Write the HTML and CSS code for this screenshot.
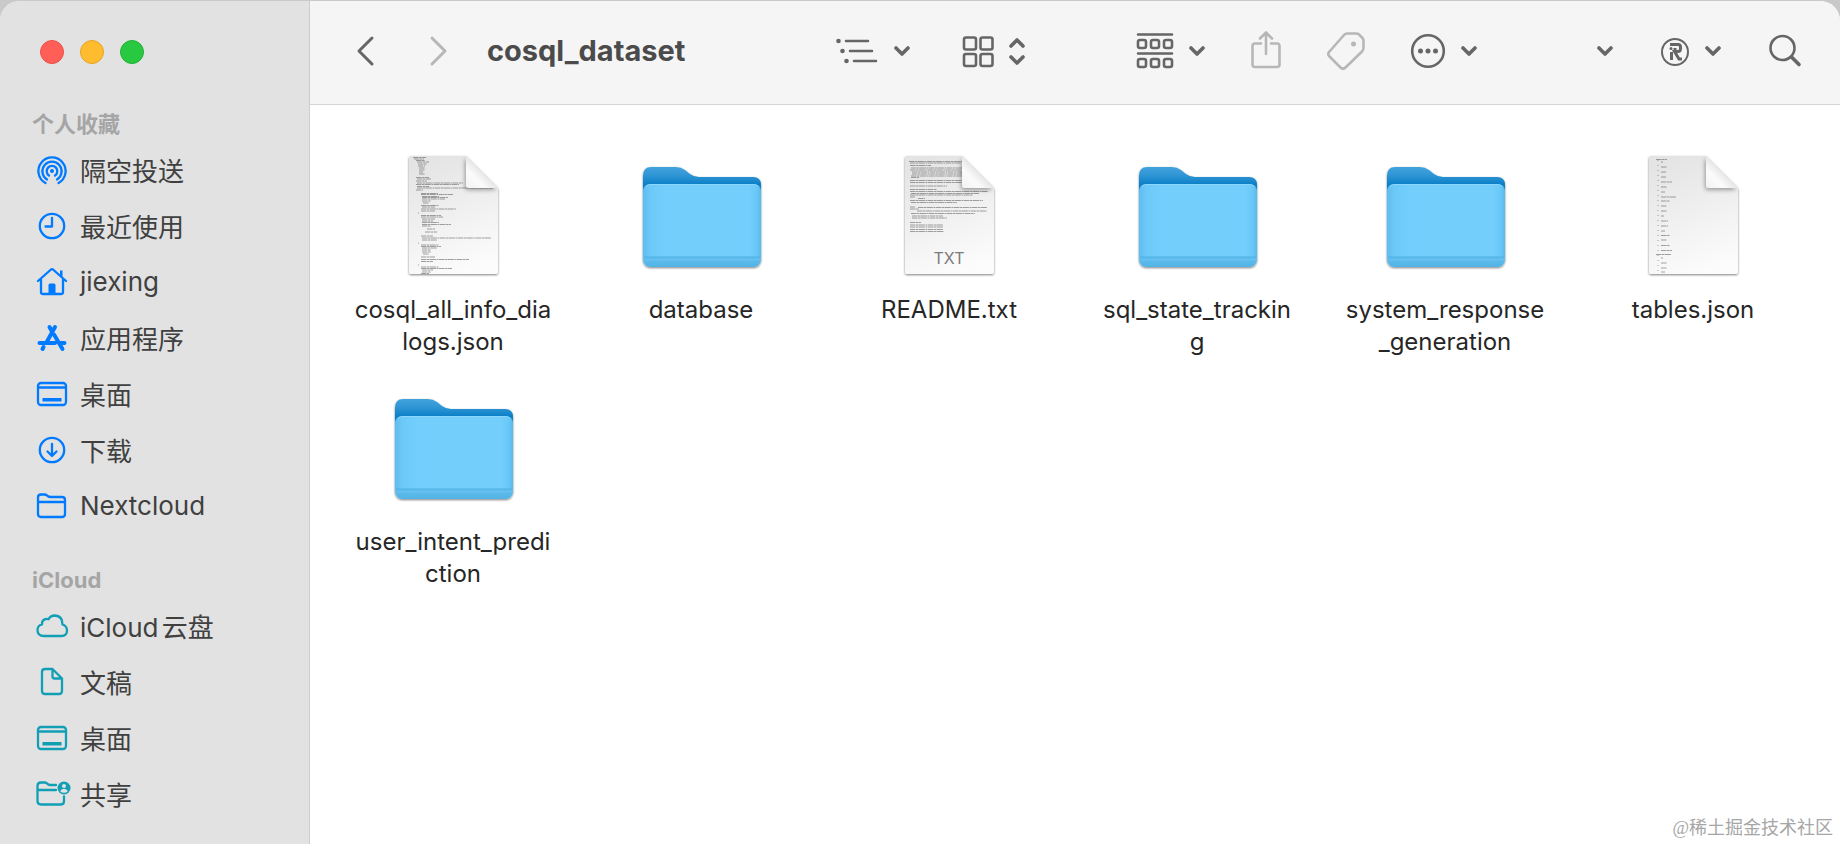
FILE: index.html
```html
<!DOCTYPE html>
<html lang="zh-CN">
<head>
<meta charset="utf-8">
<title>cosql_dataset</title>
<link rel="stylesheet" href="styles.css">
</head>
<body>
<svg class="defs" width="0" height="0" aria-hidden="true">
  <defs>
    <linearGradient id="back" x1="0" y1="16" x2="0" y2="40" gradientUnits="userSpaceOnUse">
      <stop offset="0" stop-color="#43a3dc"/><stop offset=".4" stop-color="#2b93d3"/><stop offset=".72" stop-color="#0d80c8"/>
    </linearGradient>
    <linearGradient id="side" x1="0" x2="1">
      <stop offset="0" stop-color="#5dbdf0"/><stop offset=".06" stop-color="#6bc9f8"/><stop offset=".2" stop-color="#73cefc"/><stop offset=".9" stop-color="#73cefc"/><stop offset=".96" stop-color="#6ac8f7"/><stop offset="1" stop-color="#5ab9ec"/>
    </linearGradient>
    <linearGradient id="foot" x1="0" x2="0" y1="0" y2="1">
      <stop offset="0" stop-color="#62bfef"/><stop offset="1" stop-color="#52b3e6"/>
    </linearGradient>
    <linearGradient id="paper" x1=".3" y1="0" x2=".6" y2="1">
      <stop offset="0" stop-color="#e4e4e4"/><stop offset=".55" stop-color="#f1f1f1"/><stop offset="1" stop-color="#fcfcfc"/>
    </linearGradient>
    <linearGradient id="fold" x1="1" y1="0" x2="0" y2="1">
      <stop offset=".45" stop-color="#e2e2e2"/><stop offset=".7" stop-color="#fbfbfb"/><stop offset="1" stop-color="#f2f2f2"/>
    </linearGradient>
    <filter id="shade" x="-20%" y="-20%" width="140%" height="140%">
      <feDropShadow dx="0" dy="1" stdDeviation="1.300" flood-color="#000" flood-opacity=".5"/>
    </filter>
    <filter id="fold-shade" x="-30%" y="-30%" width="160%" height="160%">
      <feDropShadow dx="-1" dy="2" stdDeviation="2" flood-color="#000" flood-opacity=".35"/>
    </filter>
    <clipPath id="sheet"><path d="M20 5H78L109 36V123H20Z"/></clipPath>
  </defs>
  <symbol id="folder" viewBox="0 0 128 128">
    <g filter="url(#shade)">
      <path d="M6 40V25Q6 16 14 16H39Q44 16 48 19L53 23Q57 26 62 26H116Q124 26 124 34V40Z" fill="url(#back)"/>
      <path d="M6 41Q6 33 14 33H116Q124 33 124 41V107Q124 116 115 116H15Q6 116 6 107Z" fill="url(#side)"/>
      <path d="M6 106H124V107Q124 116 115 116H15Q6 116 6 107Z" fill="url(#foot)"/>
    </g>
    <path d="M9 35Q11 33.500 14 33.500H116Q119 33.500 121 35" fill="none" stroke="#8bd6fb" stroke-width="1"/>
    <path d="M7 106H123" stroke="#4eb0e2" stroke-width="1"/><path d="M7 109H123" stroke="#67c2f0" stroke-width="1"/>
  </symbol>
  <symbol id="page" viewBox="0 0 128 128">
    <path d="M22 5H77L109 37V121Q109 123 107 123H22Q20 123 20 121V7Q20 5 22 5Z" fill="url(#paper)" filter="url(#shade)"/>
  </symbol>
  <symbol id="corner" viewBox="0 0 128 128">
    <g clip-path="url(#sheet)"><path d="M77 5L109 37H80Q77 37 77 34Z" fill="url(#fold)" filter="url(#fold-shade)"/></g>
  </symbol>
  <symbol id="chevron" viewBox="0 0 16 12"><path d="M2 3L8 9L14 3" class="bold"/></symbol>
  <symbol id="desktop" viewBox="0 0 34 34"><rect x="3" y="6" width="28" height="22" rx="3"/><path d="M3 10.500H31"/><rect x="7.500" y="21" width="19" height="3.500" class="solid"/></symbol>
</svg>

<div class="window">
  <aside class="sidebar">
    <div class="lights">
      <button class="light close" aria-label="关闭"></button>
      <button class="light minimize" aria-label="最小化"></button>
      <button class="light zoom" aria-label="缩放"></button>
    </div>
    <nav class="places">
      <h2 class="heading">个人收藏</h2>
      <ul class="list favorites">
        <li><a class="place" href="#"><svg class="glyph" viewBox="0 0 34 34"><circle cx="17" cy="18" r="2" class="solid"/><path d="M14 22.500A5.300 5.300 0 1 1 20 22.500M12 26.500A9.600 9.600 0 1 1 22 26.500M10.500 30A13.600 13.600 0 1 1 23.500 30"/></svg>隔空投送</a></li>
        <li><a class="place" href="#"><svg class="glyph" viewBox="0 0 34 34"><circle cx="17" cy="17" r="12.200"/><path d="M17 9V17.500H10.500"/></svg>最近使用</a></li>
        <li><a class="place" href="#"><svg class="glyph" viewBox="0 0 34 34"><path d="M3 16L16 4.500Q17 3.700 18 4.500L31 16M6 14V27Q6 29 8 29H26Q28 29 28 27V14"/><path d="M25 5.500H27.500V12L25 10Z" class="solid"/><path d="M13.500 29V20Q13.500 18.500 15 18.500H19Q20.500 18.500 20.500 20V29Z" class="solid"/></svg>jiexing</a></li>
        <li><a class="place" href="#"><svg class="glyph" viewBox="0 0 34 34"><path d="M14.500 6L17 10.500M20 6L12 20.500M4.500 22H20M25 22H29.500M19 13.500L27.500 28M8.500 26L7.500 28" class="thick"/></svg>应用程序</a></li>
        <li><a class="place" href="#"><svg class="glyph"><use href="#desktop"/></svg>桌面</a></li>
        <li><a class="place" href="#"><svg class="glyph" viewBox="0 0 34 34"><circle cx="17" cy="17" r="12.200"/><path d="M17 11V22.500M12.500 18.500L17 23L21.500 18.500"/></svg>下载</a></li>
        <li><a class="place" href="#"><svg class="glyph" viewBox="0 0 34 34"><path d="M3 25V8.500Q3 5.500 6 5.500H9.500Q11 5.500 12 6.500L13 7.300Q14 8 15.500 8H27Q30 8 30 11V25Q30 28 27 28H6Q3 28 3 25ZM3 13H30"/></svg>Nextcloud</a></li>
      </ul>
      <h2 class="heading">iCloud</h2>
      <ul class="list cloud">
        <li><a class="place" href="#"><svg class="glyph" viewBox="0 0 34 34"><path d="M9 27Q2.500 27 2.500 21Q2.500 16.500 7 15.500Q6.800 10.500 11 10Q12.300 9.800 13.500 10.300Q15.500 6.500 20 6.500Q27.500 7 27.500 15.500Q32 17 32 21.500Q32 27 26.500 27Z"/></svg>iCloud云盘</a></li>
        <li><a class="place" href="#"><svg class="glyph" viewBox="0 0 34 34"><path d="M17.500 4H10Q7 4 7 7V26Q7 29 10 29H24Q27 29 27 26V13.500ZM17.500 4V11.500Q17.500 13.500 19.500 13.500H27"/></svg>文稿</a></li>
        <li><a class="place" href="#"><svg class="glyph"><use href="#desktop"/></svg>桌面</a></li>
        <li><a class="place" href="#"><svg class="glyph" viewBox="0 0 34 34"><path d="M21 8H15Q14 8 13 7.300L11.500 6Q10.800 5.500 9.500 5.500H6Q2.500 5.500 2.500 9V24Q2.500 27.500 6 27.500H26Q29 27.500 29 24V19.500M2.500 13H21"/><circle cx="29" cy="11" r="6.500" class="solid"/><circle cx="29" cy="9" r="2" class="cut"/><path d="M25.200 14.300Q26 11.800 29 11.800T32.800 14.300Q31.500 15.800 29 15.800T25.200 14.300Z" class="cut"/></svg>共享</a></li>
      </ul>
    </nav>
  </aside>

  <div class="main">
    <header class="toolbar">
      <div class="history">
        <button class="tool" aria-label="后退"><svg class="arrow" viewBox="0 0 18 30"><path d="M16 2L3 15L16 28" class="strong"/></svg></button>
        <button class="tool dim" aria-label="前进"><svg class="arrow" viewBox="0 0 18 30"><path d="M2 2L15 15L2 28" class="strong"/></svg></button>
      </div>
      <h1 class="title">cosql_dataset</h1>
      <div class="clusters">
        <div class="cluster views">
          <button class="tool" aria-label="列表"><svg width="42" height="36" viewBox="0 0 42 36"><path d="M10 8H32M14 18H36M18 28H40"/><circle cx="2.500" cy="8" r="2.300" class="solid"/><circle cx="6.500" cy="18" r="2.300" class="solid"/><circle cx="10.500" cy="28" r="2.300" class="solid"/></svg><svg class="chev"><use href="#chevron"/></svg></button>
          <button class="tool" aria-label="图标显示"><svg width="30" height="36" viewBox="0 0 30 36"><rect x="1" y="4.500" width="12" height="12" rx="2"/><rect x="17.500" y="4.500" width="12" height="12" rx="2"/><rect x="1" y="21" width="12" height="12" rx="2"/><rect x="17.500" y="21" width="12" height="12" rx="2"/></svg><svg width="16" height="36" viewBox="0 0 16 36"><path d="M2 13L8 7L14 13M2 24L8 30L14 24" class="bold"/></svg></button>
        </div>
        <div class="cluster actions">
          <button class="tool" aria-label="分组"><svg width="36" height="36" viewBox="0 0 36 36"><path d="M1 1.500H35M1 20.500H35"/><rect x="1" y="7" width="8" height="8" rx="2"/><rect x="14" y="7" width="8" height="8" rx="2"/><rect x="27" y="7" width="8" height="8" rx="2"/><rect x="1" y="26" width="8" height="8" rx="2"/><rect x="14" y="26" width="8" height="8" rx="2"/><rect x="27" y="26" width="8" height="8" rx="2"/></svg><svg class="chev"><use href="#chevron"/></svg></button>
          <button class="tool dim" aria-label="共享"><svg width="30" height="40" viewBox="0 0 30 40"><path d="M10 12.500H4Q1.500 12.500 1.500 15V33.500Q1.500 36 4 36H26Q28.500 36 28.500 33.500V15Q28.500 12.500 26 12.500H20M15 23V2M9 7.500L15 1.500L21 7.500"/></svg></button>
          <button class="tool dim" aria-label="标签"><svg width="38" height="38" viewBox="0 0 38 38"><path d="M20 1.500H29Q31 1.500 32 2.500L35.500 6Q36.500 7 36.500 9V16Q36.500 18 35 19.500L18.500 35.500Q16 38 13.500 35.500L2.500 24.500Q0 22 2.500 19.500L17 3Q18.500 1.500 20 1.500Z"/><circle cx="26.500" cy="12" r="2.500" class="solid"/></svg></button>
          <button class="tool" aria-label="操作"><svg width="34" height="36" viewBox="0 0 34 36"><circle cx="17" cy="18" r="15.800"/><circle cx="9.500" cy="18" r="2.500" class="solid"/><circle cx="17" cy="18" r="2.500" class="solid"/><circle cx="24.500" cy="18" r="2.500" class="solid"/></svg><svg class="chev"><use href="#chevron"/></svg></button>
        </div>
        <div class="cluster">
          <button class="tool" aria-label="更多"><svg class="chev"><use href="#chevron"/></svg></button>
          <button class="tool" aria-label="R"><svg width="28" height="34" viewBox="0 0 28 34"><circle cx="14" cy="18" r="13" class="thin"/><path d="M9 10.500H17Q19.500 10.500 19.500 13V14.500Q19.500 17.500 17 17.500H13.500L18 25H21M14 14V17.500M10.500 18V26" class="flat"/><circle cx="10" cy="14.500" r="1.500" class="solid"/></svg><svg class="chev"><use href="#chevron"/></svg></button>
          <button class="tool" aria-label="搜索"><svg width="32" height="34" viewBox="0 0 32 34"><circle cx="13.500" cy="14" r="12"/><path d="M22.500 23L30 30.500" class="bold"/></svg></button>
        </div>
      </div>
    </header>

    <main class="files">
      <button class="file"><svg class="icon" viewBox="0 0 128 128"><use href="#page"/>
        <g clip-path="url(#sheet)" class="print">
          <path d="M24 6.500H37M25 8H35M27 9.500H36M28 11H40M29 13H38M29 15H36M30 17H36M30 19H36M30 21H34M30 23H36"/>
          <path d="M27 26.500H40M28 28H42M27 30H38M28 32H74M27 33.500H70M28 35.500H40M28 37H104M27 39H34"/>
          <path d="M32 42.500H49M32 43.500H64M33 45.500H50M33 46.500H59M33 48H56M33 50H42M34 52H40M32 54.500H50M33 56H46M32 58H67M32 60H46M29 62H30"/>
          <path d="M32 64.500H52M32 66H54M33 68H46M33 70H44M33 71.500H50M33 73.500H62M33 75H42M38 78H46M36 81H48M32 85H44M33 87H102M33 89H48M29 92H30"/>
          <path d="M32 94H50M32 95.500H52M33 97H48M33 99H42M33 101H42M34 103H40M32 106H46M32 108.500H80M32 110.500H44M29 114H30M32 116H50M32 117.500H63M33 119H44M33 121H42M32 122.500H40"/>
        </g><use href="#corner"/></svg><span class="name">cosql_all_info_dia<br>logs.json</span></button>
      <button class="file"><svg class="icon"><use href="#folder"/></svg><span class="name">database</span></button>
      <button class="file"><svg class="icon" viewBox="0 0 128 128"><use href="#page"/>
        <g clip-path="url(#sheet)" class="print">
          <path d="M24 10.500H80M25 12H76M25 14.500H46M26 17H80M25 19H82M27 21H80M27 23H78M26 25H79M26 26.500H34"/>
          <path d="M25 29.500H84M25 31.500H84M25 35H62M25 38.500H52M25 40.500H103M26 42.500H94M25 44H88M25 46H30M33 47.500H40M25 49.500H98M26 51.500H72"/>
          <path d="M25 56H30M33 56.500H102M25 58H34M32 60H102M26 62.500H90M27 65H58M27 67H62M25 71.500H36M25 74H58M25 76H58M25 78.500H58M25 80.500H59"/>
        </g><use href="#corner"/><text x="64" y="113" class="kind">TXT</text></svg><span class="name">README.txt</span></button>
      <button class="file"><svg class="icon"><use href="#folder"/></svg><span class="name">sql_state_trackin<br>g</span></button>
      <button class="file"><svg class="icon"><use href="#folder"/></svg><span class="name">system_response<br>_generation</span></button>
      <button class="file"><svg class="icon" viewBox="0 0 128 128"><use href="#page"/>
        <g clip-path="url(#sheet)" class="print">
          <path d="M29 9V123" class="margin"/>
          <path d="M27 8.500H38M32 11H34M32 16H38M32 21H37M32 26H37M32 31H43M32 36H38M32 41H36M32 46H47M32 50H41M32 55H38M32 60H38M32 65H35M32 70H39M32 75H39M32 80H36M32 84.500H41M32 89H38M32 94.500H41M32 99.500H43M27 103.500H42M32 107H34M32 112H38M32 117H38M32 121H36"/>
        </g><use href="#corner"/></svg><span class="name">tables.json</span></button>
      <button class="file"><svg class="icon"><use href="#folder"/></svg><span class="name">user_intent_predi<br>ction</span></button>
    </main>
  </div>
  <p class="credit">@稀土掘金技术社区</p>
</div>
</body>
</html>
```
FILE: styles.css
```css
* { box-sizing: border-box; }

body {
  margin: 0;
  padding-top: 1px;
  background: #c9c9c9;
  font-family: Inter, "Noto Sans CJK SC", sans-serif;
}

button {
  margin: 0;
  padding: 0;
  border: 0;
  background: none;
  font: inherit;
  color: inherit;
}

svg {
  display: block;
  flex: none;
  fill: none;
  stroke: currentColor;
  stroke-width: 2.3;
  stroke-linecap: round;
  stroke-linejoin: round;
  overflow: visible;
}

.defs { position: absolute; }
.solid { fill: currentColor; stroke: none; }
.cut { fill: #e2e2e2; stroke: none; }
.thin { stroke-width: 2; }
.strong { stroke-width: 3; }
.bold { stroke-width: 3.6; }
.thick { stroke-width: 4; }
.flat { stroke-width: 3; stroke-linecap: butt; stroke-linejoin: miter; }

.window {
  position: relative;
  display: flex;
  min-height: calc(100vh - 1px);
  border-radius: 20px 20px 0 0;
  overflow: hidden;
  background: #fff;
}

/* Sidebar */
.sidebar {
  flex: none;
  width: 310px;
  background: #e2e2e2;
  border-right: 1px solid #cdcdcd;
}

.lights {
  display: flex;
  align-items: center;
  gap: 16px;
  height: 104px;
  padding: 0 0 2px 40px;
}

.light {
  width: 24px;
  height: 24px;
  border-radius: 50%;
  border: 1px solid;
}

.close { background: #ff5f57; border-color: #ea5048; }
.minimize { background: #febc2e; border-color: #e5a525; }
.zoom { background: #28c840; border-color: #20b236; }

.heading {
  margin: 0;
  padding-left: 32px;
  font-size: 22px;
  line-height: 38px;
  font-weight: 700;
  color: #a5a5a5;
}

.list {
  margin: 0;
  padding: 0;
  list-style: none;
}

.favorites { margin-bottom: 26px; }

.place {
  display: flex;
  align-items: center;
  gap: 11px;
  height: 56px;
  padding: 0 0 3px 35px;
  font-size: 26px;
  color: #404040;
  text-decoration: none;
  text-autospace: normal;
}

.glyph { width: 34px; height: 34px; }
.favorites .glyph { color: #007aff; }
.cloud .glyph { color: #119fb5; }

/* Toolbar */
.main { flex: 1; min-width: 0; }

.toolbar {
  display: flex;
  align-items: center;
  height: 104px;
  padding: 0 39px 3px 46px;
  background: #f5f5f5;
  border-bottom: 1px solid #d5d5d5;
  color: #666;
}

.history { display: flex; gap: 56px; }
.arrow { width: 18px; height: 30px; }

.title {
  margin: 0 0 0 39px;
  font-size: 29px;
  line-height: 36px;
  font-weight: 700;
  color: #4b4b4b;
}

.clusters {
  display: flex;
  gap: 112px;
  margin-left: auto;
}

.cluster { display: flex; align-items: center; gap: 48px; }
.views { gap: 53px; }
.actions { gap: 46px; margin-right: 8px; }
.tool { display: flex; align-items: center; gap: 16px; }
.tool svg { stroke-width: 2.6; }
.dim { color: #b7b7b7; }
.chev { width: 16px; height: 12px; }

/* File grid */
.files {
  display: grid;
  grid-template-columns: repeat(6, 1fr);
  row-gap: 25px;
  padding: 46px 23px 0 19px;
}

.file {
  display: flex;
  flex-direction: column;
  align-items: center;
  justify-content: flex-start;
  gap: 15px;
  color: #262626;
}

.icon { width: 128px; height: 128px; stroke: none; }
.print { fill: none; stroke: #666; stroke-width: 1; stroke-dasharray: 5 .5 3 .4 6 .6 2 .5; stroke-linecap: butt; opacity: .6; }
.margin { stroke-dasharray: 1 4; }
.kind { fill: #7b7b7b; font-size: 16px; text-anchor: middle; }
.name { font-size: 24px; line-height: 32px; }

.credit {
  position: absolute;
  right: 7px;
  bottom: 4px;
  margin: 0;
  font-family: "Liberation Serif", "Noto Sans CJK SC", serif;
  font-size: 18px;
  line-height: 24px;
  color: #a6a6a6;
}
```
